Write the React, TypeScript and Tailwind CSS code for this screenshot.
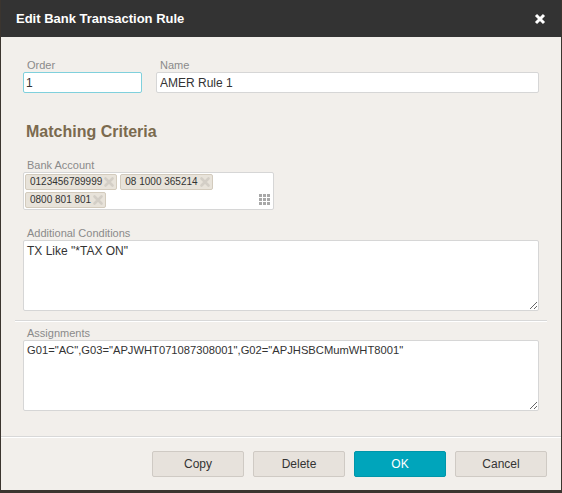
import React from 'react'

const tags = ['0123456789999', '08 1000 365214', '0800 801 801']

const Tag = ({ label }: { label: string }) => (
  <span className="flex items-center h-[16px] pl-[4px] pr-[1px] bg-[#e8e3da] border border-[#d3cbbd] rounded-[2px] text-[10px] leading-none text-[#333]">
    {label}
    <svg width="12" height="12" viewBox="0 0 12 12" className="ml-[1px]">
      <path d="M2.5 2.5L9.5 9.5M9.5 2.5L2.5 9.5" stroke="#d3cec6" strokeWidth="2.6" strokeLinecap="round" />
    </svg>
  </span>
)

const Label = ({ children }: { children: React.ReactNode }) => (
  <div className="pl-[4px] text-[11px] leading-[14px] text-[#8a8a8a]">{children}</div>
)

const Button = ({ children, primary }: { children: React.ReactNode; primary?: boolean }) => (
  <button
    className={
      primary
        ? 'w-[92px] h-[26px] rounded-[2px] border border-[#0096aa] bg-[#00a5bb] text-[12px] text-white'
        : 'w-[92px] h-[26px] rounded-[2px] border border-[#cfcac4] bg-[#e7e2dc] text-[12px] text-[#333]'
    }
  >
    {children}
  </button>
)

export default function App() {
  return (
    <div className="w-[562px] h-[493px] bg-[#3b352f] font-['Liberation_Sans',Arial,sans-serif]">
      <div className="w-[562px] h-[492px] flex flex-col border-x border-b-2 border-[#3b352f] bg-[#f2efeb]">
        <div className="h-[37px] shrink-0 flex items-center justify-between pl-[15px] pr-[15px] bg-[#333333]">
          <span className="text-white font-bold text-[13px]">Edit Bank Transaction Rule</span>
          <svg width="12" height="12" viewBox="0 0 12 12">
            <path d="M2 2L10 10M10 2L2 10" stroke="#fff" strokeWidth="3" />
          </svg>
        </div>

        <div className="flex flex-col px-[22px] pt-[21px]">
          <div className="flex gap-[14px]">
            <div className="w-[119px] flex flex-col">
              <Label>Order</Label>
              <input
                readOnly
                defaultValue="1"
                className="h-[21px] px-[2px] bg-white border border-[#7fd0dc] rounded-[2px] text-[12px] text-[#333] outline-none"
              />
            </div>
            <div className="flex-1 flex flex-col">
              <Label>Name</Label>
              <input
                readOnly
                defaultValue="AMER Rule 1"
                className="h-[21px] px-[3px] bg-white border border-[#d6d6d6] rounded-[2px] text-[12px] text-[#333] outline-none"
              />
            </div>
          </div>

          <h2 className="mt-[29px] pl-[3px] text-[16px] leading-[20px] font-bold text-[#7b6a4e]">Matching Criteria</h2>

          <div className="mt-[16px]">
            <Label>Bank Account</Label>
            <div className="relative w-[251px] h-[38px] bg-white border border-[#d6d6d6] rounded-[2px] p-[1px]">
              <div className="flex flex-wrap gap-x-[3px] gap-y-[2px]">
                {tags.map((t) => (
                  <Tag key={t} label={t} />
                ))}
              </div>
              <div className="absolute right-[3px] bottom-[4px] grid grid-cols-3 gap-[1px]">
                {Array.from({ length: 9 }).map((_, i) => (
                  <span key={i} className="w-[3px] h-[3px] bg-[#a8a8a8]" />
                ))}
              </div>
            </div>
          </div>

          <div className="mt-[16px]">
            <Label>Additional Conditions</Label>
            <textarea
              readOnly
              defaultValue={'TX Like "*TAX ON"'}
              className="block w-full h-[71px] px-[3px] py-[1px] bg-white border border-[#d6d6d6] rounded-[2px] text-[12px] text-[#333] outline-none"
            />
          </div>
        </div>

        <div className="mx-[14px] mt-[9px] h-[2px] border-t border-[#d8d8d8] border-b border-b-white" />

        <div className="px-[22px] pt-[4px]">
          <Label>Assignments</Label>
          <textarea
            readOnly
            defaultValue={'G01="AC",G03="APJWHT071087308001",G02="APJHSBCMumWHT8001"'}
            className="block w-full h-[71px] px-[3px] py-[1px] bg-white border border-[#d6d6d6] rounded-[2px] text-[11.2px] text-[#333] outline-none"
          />
        </div>

        <div className="mt-[25px] h-[2px] border-t border-[#d8d8d8] border-b border-b-white" />

        <div className="flex justify-end gap-[9px] pt-[13px] pr-[14px]">
          <Button>Copy</Button>
          <Button>Delete</Button>
          <Button primary>OK</Button>
          <Button>Cancel</Button>
        </div>
      </div>
    </div>
  )
}
